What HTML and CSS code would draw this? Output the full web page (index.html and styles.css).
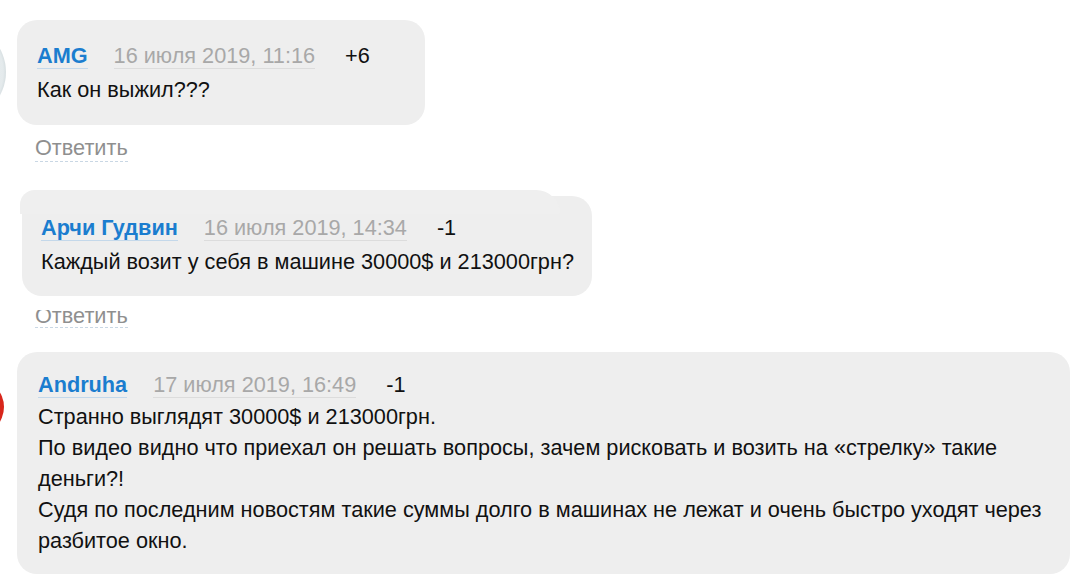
FILE: index.html
```html
<!DOCTYPE html>
<html lang="ru">
<head>
<meta charset="utf-8">
<title>Комментарии</title>
<link rel="stylesheet" href="styles.css">
</head>
<body>
<div class="thread">
  <div class="comment">
    <div class="avatar avatar--grey"></div>
    <div class="body">
      <div class="bubble bubble--first">
        <div class="meta">
          <span class="author">AMG</span>
          <span class="date">16 июля 2019, 11:16</span>
          <span class="score">+6</span>
        </div>
        <div class="text">Как он выжил???</div>
      </div>
      <div class="reply"><span class="reply-link">Ответить</span></div>
    </div>
  </div>

  <div class="comment comment--reply">
    <div class="body">
      <div class="bubble bubble--second">
        <div class="meta">
          <span class="author">Арчи Гудвин</span>
          <span class="date">16 июля 2019, 14:34</span>
          <span class="score">-1</span>
        </div>
        <div class="text">Каждый возит у себя в машине 30000$ и 213000грн?</div>
      </div>
      <div class="reply reply--clipped"><span class="reply-link">Ответить</span></div>
    </div>
  </div>

  <div class="comment comment--last">
    <div class="avatar avatar--red"></div>
    <div class="body">
      <div class="bubble bubble--third">
        <div class="meta">
          <span class="author">Andruha</span>
          <span class="date">17 июля 2019, 16:49</span>
          <span class="score">-1</span>
        </div>
        <div class="text">Странно выглядят 30000$ и 213000грн.<br>По видео видно что приехал он решать вопросы, зачем рисковать и возить на «стрелку» такие<br>деньги?!<br>Судя по последним новостям такие суммы долго в машинах не лежат и очень быстро уходят через<br>разбитое окно.</div>
      </div>
    </div>
  </div>
</div>
</body>
</html>
```

FILE: styles.css
```css
* { box-sizing: border-box; }

html, body {
  margin: 0;
  padding: 0;
  background: #ffffff;
  overflow: hidden;
}

body {
  font-family: "Liberation Sans", Arial, sans-serif;
  font-size: 21.7px;
  color: #111111;
}

.thread {
  padding-top: 20px;
}

.comment {
  display: flex;
  align-items: flex-start;
}

.comment--reply {
  padding-left: 22px;
  margin-top: 35px;
}

.comment--last {
  margin-top: 21px;
}

.avatar {
  flex: none;
  border-radius: 50%;
}

.avatar--grey {
  width: 96px;
  height: 96px;
  margin-left: -90px;
  margin-right: 11px;
  margin-top: 4px;
  background: radial-gradient(circle at 45% 50%, #f4f6f7 0%, #e4eaec 70%, #a9b8bc 88%, #c9d3d5 100%);
}

.avatar--red {
  width: 56px;
  height: 56px;
  margin-left: -52px;
  margin-right: 13px;
  margin-top: 27px;
  background: #d8261b;
}

.body {
  display: flex;
  flex-direction: column;
  align-items: flex-start;
}

.bubble {
  position: relative;
  background: #eeeeee;
  border-radius: 20px;
  padding: 20px 20px 20px 20px;
}

.bubble--first {
  width: 408px;
}

.bubble--second {
  width: 570px;
  padding: 16px 12px 19px 19px;
  border-top-left-radius: 14px;
}

.bubble--second .text {
  white-space: nowrap;
}

.bubble--second::before {
  content: "";
  position: absolute;
  left: -2px;
  top: -6px;
  width: 540px;
  height: 24px;
  background: #efefef;
  border-radius: 16px 26px 0 0;
}

.bubble--second > * {
  position: relative;
}

.bubble--third {
  width: 1053px;
  padding: 17px 20px 18px 21px;
}

.bubble--third .meta {
  margin-bottom: 1px;
}

.meta {
  display: flex;
  align-items: baseline;
  line-height: 31px;
  margin-bottom: 3px;
}

.author {
  font-weight: bold;
  color: #1b7dcf;
  border-bottom: 1px solid #c4d8ea;
  line-height: 24px;
}

.date {
  color: #a8a8a8;
  margin-left: 26px;
  border-bottom: 1px solid #dcdcdc;
  line-height: 24px;
}

.score {
  color: #111111;
  margin-left: 30px;
}

.text {
  line-height: 31px;
}

.reply {
  margin-top: 10px;
  margin-left: 18px;
  line-height: 26px;
}

.reply-link {
  color: #8f8f8f;
  border-bottom: 1px dashed #c9d7e4;
  padding-bottom: 1px;
}

.reply--clipped {
  margin-top: 14px;
  margin-left: 13px;
  line-height: 20px;
  height: 21px;
  overflow: hidden;
}

.reply--clipped .reply-link {
  display: inline-block;
  vertical-align: top;
  line-height: 20px;
  margin-top: -4px;
}
```
